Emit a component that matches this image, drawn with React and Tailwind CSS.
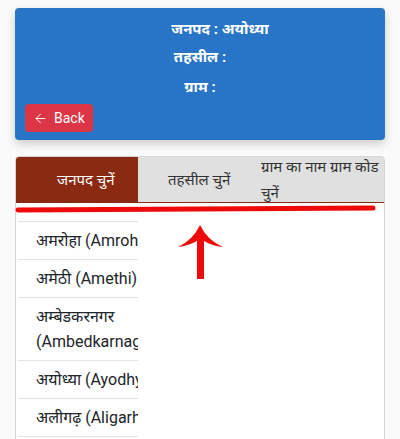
import { ArrowLeft } from 'lucide-react';

const districts = [
  'अमरोहा (Amroha)',
  'अमेठी (Amethi)',
  'अम्बेडकरनगर (Ambedkarnagar)',
  'अयोध्या (Ayodhya)',
  'अलीगढ़ (Aligarh)',
  'आगरा (Agra)',
];

const App = () => {
  return (
    <div className="relative h-[439px] w-[400px] overflow-hidden bg-[#fafafa] font-['Roboto','Noto_Sans',sans-serif]">
      {/* Header card */}
      <div className="mx-[15px] mt-[8px] h-[132px] rounded-[4px] bg-[#2874c6] px-[10px] pt-[11px] shadow-[0_4px_10px_rgba(0,0,0,0.18)]">
        <div className="flex flex-col items-center gap-[8px] text-[15px] font-bold leading-[20px] text-white">
          <div className="ml-[40px]">जनपद : अयोध्या</div>
          <div>तहसील :</div>
          <div className="mt-[2px]">ग्राम :</div>
        </div>
        <button className="mt-[7px] flex h-[28px] items-center gap-[6px] rounded-[4px] bg-[#dc3545] px-[8px] text-[14px] text-white">
          <ArrowLeft size={15} strokeWidth={1.5} />
          Back
        </button>
      </div>

      {/* Tabs panel */}
      <div className="relative mx-[15px] mt-[16px] h-[300px] rounded-t-[4px] border border-[#d6d6d6] bg-white">
        <div className="flex h-[46px] border-b border-[#8a2a12] text-[15px] leading-[26px]">
          <div className="flex w-[122px] items-center pl-[41px] text-white bg-[#8a2a12] rounded-tl-[3px]">
            जनपद चुनें
          </div>
          <div className="flex w-[112px] items-center pl-[30px] text-[#333] bg-[#e0e0e0]">
            तहसील चुनें
          </div>
          <div className="flex flex-1 items-center pl-[11px] text-[#333] bg-[#e0e0e0] rounded-tr-[3px]">
            ग्राम का नाम ग्राम कोड चुनें
          </div>
        </div>

        <div className="mt-[18px] ml-[2px] w-[120px] overflow-hidden">
          {districts.map((d) => (
            <div
              key={d}
              className="border-t border-[#e3e3e3] py-[6px] pl-[18px] pr-0 text-[16px] leading-[25px] text-[#212529] whitespace-nowrap"
            >
              {d === 'अम्बेडकरनगर (Ambedkarnagar)' ? (
                <>
                  <div>अम्बेडकरनगर</div>
                  <div>(Ambedkarnagar)</div>
                </>
              ) : (
                d
              )}
            </div>
          ))}
        </div>
      </div>

      {/* Annotation: red underline and arrow */}
      <svg className="pointer-events-none absolute left-0 top-0" width="400" height="439">
        <path d="M18 210 L373 208" stroke="#ee0a0a" strokeWidth="5" strokeLinecap="round" />
        <path
          d="M200 225 Q207 240 223 247 Q212 246 204 241 L204 279 L197 279 L197 241 Q188 246 178 247 Q193 240 200 225 Z"
          fill="#ee0a0a"
        />
      </svg>
    </div>
  );
};

export default App;
